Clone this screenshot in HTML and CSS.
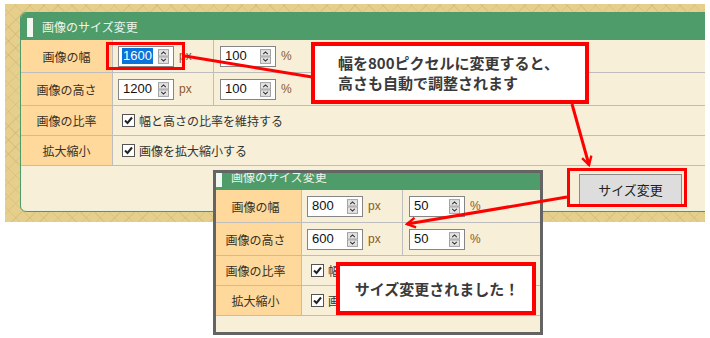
FILE: index.html
```html
<!DOCTYPE html>
<html>
<head>
    <meta charset="utf-8">
    <link rel="stylesheet" href="styles.css">
    <title>画像のサイズ変更</title>
</head>
<body>
<div class="stage">

    <!-- first screenshot: the form before resizing -->
    <div class="backdrop">
        <div class="panel">
            <div class="panel-head"><span class="head-mark"></span>画像のサイズ変更</div>
            <div class="form">
                <div class="cell label">画像の幅</div>
                <div class="cell val col-a">
                    <span class="field"><span class="value selected">1600</span><svg class="spin" viewBox="0 0 12 16"><rect x="0.5" y="0.5" width="11" height="7" fill="#e2e2e2" stroke="#9c9c9c"/><rect x="0.5" y="8.5" width="11" height="7" fill="#e2e2e2" stroke="#9c9c9c"/><path d="M3.5 5.5 L6 3 L8.5 5.5" fill="none" stroke="#333" stroke-width="1.2"/><path d="M3.5 10.5 L6 13 L8.5 10.5" fill="none" stroke="#333" stroke-width="1.2"/></svg></span>
                    <span class="unit">px</span>
                </div>
                <div class="cell val col-b">
                    <span class="field"><span class="value">100</span><svg class="spin" viewBox="0 0 12 16"><rect x="0.5" y="0.5" width="11" height="7" fill="#e2e2e2" stroke="#9c9c9c"/><rect x="0.5" y="8.5" width="11" height="7" fill="#e2e2e2" stroke="#9c9c9c"/><path d="M3.5 5.5 L6 3 L8.5 5.5" fill="none" stroke="#333" stroke-width="1.2"/><path d="M3.5 10.5 L6 13 L8.5 10.5" fill="none" stroke="#333" stroke-width="1.2"/></svg></span>
                    <span class="unit">%</span>
                </div>

                <div class="cell label">画像の高さ</div>
                <div class="cell val col-a">
                    <span class="field"><span class="value">1200</span><svg class="spin" viewBox="0 0 12 16"><rect x="0.5" y="0.5" width="11" height="7" fill="#e2e2e2" stroke="#9c9c9c"/><rect x="0.5" y="8.5" width="11" height="7" fill="#e2e2e2" stroke="#9c9c9c"/><path d="M3.5 5.5 L6 3 L8.5 5.5" fill="none" stroke="#333" stroke-width="1.2"/><path d="M3.5 10.5 L6 13 L8.5 10.5" fill="none" stroke="#333" stroke-width="1.2"/></svg></span>
                    <span class="unit">px</span>
                </div>
                <div class="cell val col-b">
                    <span class="field"><span class="value">100</span><svg class="spin" viewBox="0 0 12 16"><rect x="0.5" y="0.5" width="11" height="7" fill="#e2e2e2" stroke="#9c9c9c"/><rect x="0.5" y="8.5" width="11" height="7" fill="#e2e2e2" stroke="#9c9c9c"/><path d="M3.5 5.5 L6 3 L8.5 5.5" fill="none" stroke="#333" stroke-width="1.2"/><path d="M3.5 10.5 L6 13 L8.5 10.5" fill="none" stroke="#333" stroke-width="1.2"/></svg></span>
                    <span class="unit">%</span>
                </div>

                <div class="cell label short">画像の比率</div>
                <div class="cell val wide short">
                    <svg class="check" viewBox="0 0 13 13"><rect x="0.5" y="0.5" width="12" height="12" fill="#fff" stroke="#555"/><path d="M3 6.5 L5.5 9 L10 3.5" fill="none" stroke="#222" stroke-width="2"/></svg>
                    <span>幅と高さの比率を維持する</span>
                </div>

                <div class="cell label short">拡大縮小</div>
                <div class="cell val wide short">
                    <svg class="check" viewBox="0 0 13 13"><rect x="0.5" y="0.5" width="12" height="12" fill="#fff" stroke="#555"/><path d="M3 6.5 L5.5 9 L10 3.5" fill="none" stroke="#222" stroke-width="2"/></svg>
                    <span>画像を拡大縮小する</span>
                </div>
            </div>
            <div class="panel-foot"><button class="btn">サイズ変更</button></div>
        </div>
    </div>

    <!-- second screenshot: the form after resizing -->
    <div class="shot">
        <div class="panel">
            <div class="panel-head"><span class="head-mark"></span>画像のサイズ変更</div>
            <div class="form">
                <div class="cell label">画像の幅</div>
                <div class="cell val col-a">
                    <span class="field"><span class="value">800</span><svg class="spin" viewBox="0 0 12 16"><rect x="0.5" y="0.5" width="11" height="7" fill="#e2e2e2" stroke="#9c9c9c"/><rect x="0.5" y="8.5" width="11" height="7" fill="#e2e2e2" stroke="#9c9c9c"/><path d="M3.5 5.5 L6 3 L8.5 5.5" fill="none" stroke="#333" stroke-width="1.2"/><path d="M3.5 10.5 L6 13 L8.5 10.5" fill="none" stroke="#333" stroke-width="1.2"/></svg></span>
                    <span class="unit">px</span>
                </div>
                <div class="cell val col-b">
                    <span class="field"><span class="value">50</span><svg class="spin" viewBox="0 0 12 16"><rect x="0.5" y="0.5" width="11" height="7" fill="#e2e2e2" stroke="#9c9c9c"/><rect x="0.5" y="8.5" width="11" height="7" fill="#e2e2e2" stroke="#9c9c9c"/><path d="M3.5 5.5 L6 3 L8.5 5.5" fill="none" stroke="#333" stroke-width="1.2"/><path d="M3.5 10.5 L6 13 L8.5 10.5" fill="none" stroke="#333" stroke-width="1.2"/></svg></span>
                    <span class="unit">%</span>
                </div>

                <div class="cell label">画像の高さ</div>
                <div class="cell val col-a">
                    <span class="field"><span class="value">600</span><svg class="spin" viewBox="0 0 12 16"><rect x="0.5" y="0.5" width="11" height="7" fill="#e2e2e2" stroke="#9c9c9c"/><rect x="0.5" y="8.5" width="11" height="7" fill="#e2e2e2" stroke="#9c9c9c"/><path d="M3.5 5.5 L6 3 L8.5 5.5" fill="none" stroke="#333" stroke-width="1.2"/><path d="M3.5 10.5 L6 13 L8.5 10.5" fill="none" stroke="#333" stroke-width="1.2"/></svg></span>
                    <span class="unit">px</span>
                </div>
                <div class="cell val col-b">
                    <span class="field"><span class="value">50</span><svg class="spin" viewBox="0 0 12 16"><rect x="0.5" y="0.5" width="11" height="7" fill="#e2e2e2" stroke="#9c9c9c"/><rect x="0.5" y="8.5" width="11" height="7" fill="#e2e2e2" stroke="#9c9c9c"/><path d="M3.5 5.5 L6 3 L8.5 5.5" fill="none" stroke="#333" stroke-width="1.2"/><path d="M3.5 10.5 L6 13 L8.5 10.5" fill="none" stroke="#333" stroke-width="1.2"/></svg></span>
                    <span class="unit">%</span>
                </div>

                <div class="cell label short">画像の比率</div>
                <div class="cell val wide short">
                    <svg class="check" viewBox="0 0 13 13"><rect x="0.5" y="0.5" width="12" height="12" fill="#fff" stroke="#555"/><path d="M3 6.5 L5.5 9 L10 3.5" fill="none" stroke="#222" stroke-width="2"/></svg>
                    <span>幅と高さの比率を維持する</span>
                </div>

                <div class="cell label short">拡大縮小</div>
                <div class="cell val wide short">
                    <svg class="check" viewBox="0 0 13 13"><rect x="0.5" y="0.5" width="12" height="12" fill="#fff" stroke="#555"/><path d="M3 6.5 L5.5 9 L10 3.5" fill="none" stroke="#222" stroke-width="2"/></svg>
                    <span>画像を拡大縮小する</span>
                </div>
            </div>
            <div class="panel-foot"><button class="btn">サイズ変更</button></div>
        </div>
    </div>

    <!-- annotation arrows -->
    <svg class="arrows" viewBox="0 0 710 338">
        <defs>
            <marker id="head" viewBox="0 0 10 10" refX="8" refY="5" markerWidth="4" markerHeight="4" orient="auto">
                <path d="M1 1 L8 5 L1 9" fill="none" stroke="#f00" stroke-width="2"/>
            </marker>
        </defs>
        <line x1="185" y1="56" x2="312" y2="77" stroke="#f00" stroke-width="3"/>
        <line x1="572" y1="104" x2="589" y2="165" stroke="#f00" stroke-width="3" marker-end="url(#head)"/>
        <line x1="567" y1="197" x2="407" y2="224" stroke="#f00" stroke-width="3" marker-end="url(#head)"/>
    </svg>

    <div class="ring ring-input"></div>
    <div class="ring ring-btn"></div>

    <div class="callout callout-top">
        <p>幅を800ピクセルに変更すると、</p>
        <p>高さも自動で調整されます</p>
    </div>
    <div class="callout callout-done">
        <p>サイズ変更されました！</p>
    </div>
</div>
</body>
</html>
```

FILE: styles.css
```css
body, html {
    margin: 0;
    padding: 0;
    background: #fff;
    font-family: "Noto Sans CJK JP", "Noto Sans", sans-serif;
    color: #333;
}

.stage {
    position: relative;
    width: 710px;
    height: 338px;
    overflow: hidden;
}

/* tan cross-hatched page background */
.backdrop {
    box-sizing: border-box;
    margin: 4px 5px 0 5px;
    height: 218px;
    padding: 8px 0 0 15px;
    overflow: hidden;
    background-color: #e6cf8d;
    background-image:
        repeating-linear-gradient(45deg, rgba(190, 160, 90, 0.25) 0 1px, transparent 1px 10px),
        repeating-linear-gradient(-45deg, rgba(190, 160, 90, 0.25) 0 1px, transparent 1px 10px);
}

.panel {
    width: 700px;
    border: 1px solid #4f9a6a;
    border-radius: 6px;
    overflow: hidden;
    background: #f7efd8;
    box-shadow: inset 0 0 0 1px #e8f0e0;
}

.panel-head {
    display: flex;
    align-items: center;
    height: 27px;
    background: #4d9c69;
    color: #eef6ec;
    font-size: 12px;
}

.head-mark {
    width: 6px;
    height: 19px;
    margin: 2px 9px 0 6px;
    background: #f2f7f1;
}

.form {
    display: grid;
    grid-template-columns: 92px 101px 1fr;
    grid-template-rows: 33px 33px 30px 30px;
    font-size: 12px;
}

.cell {
    box-sizing: border-box;
    display: flex;
    align-items: center;
    border-bottom: 1px solid #bdbdbd;
}

.label {
    justify-content: center;
    background: #fed99b;
    border-right: 1px solid #bdbdbd;
    color: #3a3024;
}

.col-a {
    padding-left: 5px;
    border-right: 1px solid #bdbdbd;
}

.col-b {
    padding-left: 6px;
}

.wide {
    grid-column: span 2;
    padding-left: 9px;
}

.field {
    box-sizing: border-box;
    display: flex;
    align-items: center;
    justify-content: space-between;
    width: 56px;
    height: 21px;
    padding: 0 4px 0 3px;
    border: 1px solid #858585;
    background: #fff;
}

.value {
    font-family: "Liberation Sans", Arial, sans-serif;
    font-size: 13px;
    line-height: 16px;
    color: #111;
    padding: 0 1px;
}

.value.selected {
    background: #0a74da;
    color: #fff;
}

.spin {
    width: 11px;
    height: 15px;
}

.unit {
    margin-left: 5px;
    font-family: "Liberation Sans", Arial, sans-serif;
    font-size: 12px;
    color: #8a5a2a;
}

.check {
    width: 13px;
    height: 13px;
    margin-right: 4px;
}

.panel-foot {
    display: flex;
    justify-content: flex-end;
    align-items: center;
    height: 45px;
    padding-right: 39px;
}

.btn {
    width: 103px;
    height: 31px;
    margin-top: 2px;
    border: 1px solid #8a8a8a;
    background: #dddddd;
    font-family: "Noto Sans CJK JP", sans-serif;
    font-size: 13px;
    color: #222;
}

/* second, cropped screenshot laid over the first */
.shot {
    position: absolute;
    left: 213px;
    top: 170px;
    width: 330px;
    height: 165px;
    box-sizing: border-box;
    border: 3px solid #646464;
    overflow: hidden;
    background: #f7efd8;
}

.shot .panel {
    margin: -11px 0 0 -7px;
}

.arrows {
    position: absolute;
    left: 0;
    top: 0;
    width: 710px;
    height: 338px;
}

.ring {
    position: absolute;
    box-sizing: border-box;
    border: 3px solid #f00;
}

.ring-input {
    left: 106px;
    top: 42px;
    width: 79px;
    height: 28px;
}

.ring-btn {
    left: 567px;
    top: 168px;
    width: 120px;
    height: 39px;
}

.callout {
    position: absolute;
    box-sizing: border-box;
    display: flex;
    flex-direction: column;
    justify-content: center;
    border: 4px solid #f00;
    background: #fff;
    color: #3a3a3a;
    font-size: 15px;
    font-weight: bold;
    line-height: 20px;
}

.callout p {
    margin: 0;
}

.callout-top {
    left: 311px;
    top: 42px;
    width: 278px;
    height: 62px;
    padding: 0 0 1px 23px;
}

.callout-done {
    left: 336px;
    top: 262px;
    width: 200px;
    height: 53px;
    align-items: center;
    padding-left: 2px;
}
```
